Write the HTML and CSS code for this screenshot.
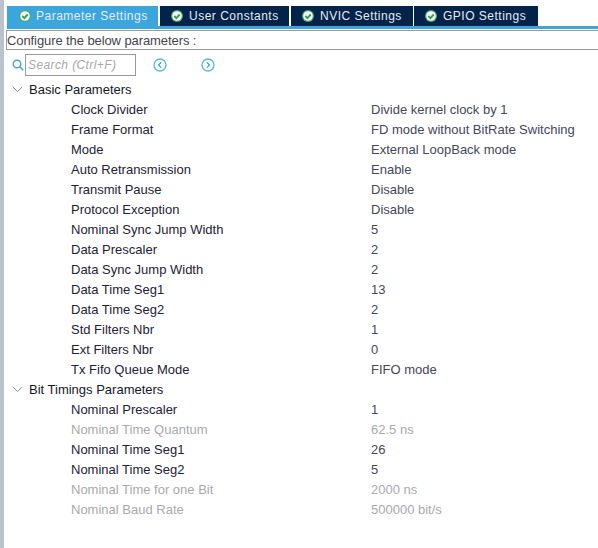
FILE: index.html
```html
<!DOCTYPE html>
<html lang="en">
<head>
<meta charset="utf-8">
<title>Parameter Settings</title>
<link rel="stylesheet" href="styles.css">
</head>
<body>
<div class="app">
  <nav class="tabs">
    <div class="tab tab-active"><svg class="check" viewBox="0 0 12 12"><circle cx="6" cy="6" r="6" fill="#4fa66e"/><circle cx="6" cy="6" r="4.8" fill="#f2f8f4"/><path d="M3.3 6l2.1 2.1 3.3-3.6" fill="none" stroke="#3d9a5f" stroke-width="1.9"/></svg><span>Parameter Settings</span></div>
    <div class="tab t2"><svg class="check" viewBox="0 0 12 12"><circle cx="6" cy="6" r="6" fill="#4fa66e"/><circle cx="6" cy="6" r="4.8" fill="#f2f8f4"/><path d="M3.3 6l2.1 2.1 3.3-3.6" fill="none" stroke="#3d9a5f" stroke-width="1.9"/></svg><span>User Constants</span></div>
    <div class="tab t3"><svg class="check" viewBox="0 0 12 12"><circle cx="6" cy="6" r="6" fill="#4fa66e"/><circle cx="6" cy="6" r="4.8" fill="#f2f8f4"/><path d="M3.3 6l2.1 2.1 3.3-3.6" fill="none" stroke="#3d9a5f" stroke-width="1.9"/></svg><span>NVIC Settings</span></div>
    <div class="tab t4"><svg class="check" viewBox="0 0 12 12"><circle cx="6" cy="6" r="6" fill="#4fa66e"/><circle cx="6" cy="6" r="4.8" fill="#f2f8f4"/><path d="M3.3 6l2.1 2.1 3.3-3.6" fill="none" stroke="#3d9a5f" stroke-width="1.9"/></svg><span>GPIO Settings</span></div>
  </nav>
  <div class="accent"></div>
  <div class="hint">Configure the below parameters :</div>
  <div class="search">
    <svg class="mag" viewBox="0 0 12 12"><circle cx="5" cy="5" r="3.8" fill="none" stroke="#3aa6dc" stroke-width="1.4"/><path d="M7.8 7.8L11.2 11.2" stroke="#3aa6dc" stroke-width="1.6"/></svg>
    <div class="search-box">Search (Ctrl+F)</div>
    <svg class="nav nav-first" viewBox="0 0 14 14"><circle cx="7" cy="7" r="6" fill="none" stroke="#5ab8e6" stroke-width="1.3"/><path d="M8 4.5L5.5 7 8 9.5" fill="none" stroke="#3aa6dc" stroke-width="1.3"/></svg>
    <svg class="nav nav-second" viewBox="0 0 14 14"><circle cx="7" cy="7" r="6" fill="none" stroke="#5ab8e6" stroke-width="1.3"/><path d="M6 4.5L8.5 7 6 9.5" fill="none" stroke="#3aa6dc" stroke-width="1.3"/></svg>
  </div>
  <div class="tree">
    <div class="group"><svg class="chev" viewBox="0 0 11 7"><path d="M.7 .8L5.5 5.6 10.3 .8" fill="none" stroke="#8a8a8a"/></svg>Basic Parameters</div>
    <div class="row"><span class="k">Clock Divider</span><span>Divide kernel clock by 1</span></div>
    <div class="row"><span class="k">Frame Format</span><span>FD mode without BitRate Switching</span></div>
    <div class="row"><span class="k">Mode</span><span>External LoopBack mode</span></div>
    <div class="row"><span class="k">Auto Retransmission</span><span>Enable</span></div>
    <div class="row"><span class="k">Transmit Pause</span><span>Disable</span></div>
    <div class="row"><span class="k">Protocol Exception</span><span>Disable</span></div>
    <div class="row"><span class="k">Nominal Sync Jump Width</span><span>5</span></div>
    <div class="row"><span class="k">Data Prescaler</span><span>2</span></div>
    <div class="row"><span class="k">Data Sync Jump Width</span><span>2</span></div>
    <div class="row"><span class="k">Data Time Seg1</span><span>13</span></div>
    <div class="row"><span class="k">Data Time Seg2</span><span>2</span></div>
    <div class="row"><span class="k">Std Filters Nbr</span><span>1</span></div>
    <div class="row"><span class="k">Ext Filters Nbr</span><span>0</span></div>
    <div class="row"><span class="k">Tx Fifo Queue Mode</span><span>FIFO mode</span></div>
    <div class="group"><svg class="chev" viewBox="0 0 11 7"><path d="M.7 .8L5.5 5.6 10.3 .8" fill="none" stroke="#8a8a8a"/></svg>Bit Timings Parameters</div>
    <div class="row"><span class="k">Nominal Prescaler</span><span>1</span></div>
    <div class="row off"><span class="k">Nominal Time Quantum</span><span>62.5 ns</span></div>
    <div class="row"><span class="k">Nominal Time Seg1</span><span>26</span></div>
    <div class="row"><span class="k">Nominal Time Seg2</span><span>5</span></div>
    <div class="row off"><span class="k">Nominal Time for one Bit</span><span>2000 ns</span></div>
    <div class="row off"><span class="k">Nominal Baud Rate</span><span>500000 bit/s</span></div>
  </div>
</div>
</body>
</html>
```

FILE: styles.css
```css
* { box-sizing: border-box; }
html, body { margin: 0; padding: 0; }
body {
  width: 598px;
  height: 548px;
  overflow: hidden;
  background: #fff;
  font-family: "Liberation Sans", Arial, sans-serif;
  font-size: 13px;
  color: #1d2238;
}
.app {
  height: 548px;
  padding: 6px 0 0 6px;
  background: #fff;
  box-shadow: inset 4px 0 0 #b9c3cb;
}
.tabs { display: flex; height: 20px; }
.tab {
  display: flex;
  align-items: center;
  background: #03234b;
  color: #e6ebf1;
  font-size: 12px;
  letter-spacing: 0.5px;
}
.tab-active { background: #3aa6dc; width: 151px; padding-left: 12px; margin-left: 1px; margin-right: 2px; }
.t2 { width: 129px; padding-left: 11px; margin-right: 2px; }
.t3 { width: 122px; padding-left: 11px; margin-right: 1px; }
.t4 { width: 124px; padding-left: 11px; }
.check { width: 12px; height: 12px; margin-right: 5px; flex: none; }
.t2 .check, .t3 .check, .t4 .check { margin-right: 6px; }
.accent { height: 3px; background: #3aa6dc; margin-left: 1px; }
.hint {
  height: 20px;
  margin-top: 1px;
  border-top: 1px solid #999;
  border-bottom: 1px solid #999;
  border-left: 1px solid #999;
  line-height: 19px;
  letter-spacing: -0.09px;
  color: #45454f;
}
.search { display: flex; align-items: center; height: 29px; padding: 1px 0 0 6px; }
.mag { width: 12px; height: 12px; margin-right: 1px; flex: none; }
.search-box {
  width: 111px;
  height: 22px;
  border: 1px solid #999;
  color: #a8a8a8;
  font-size: 12px;
  font-style: italic;
  padding-left: 2px;
  line-height: 21px;
  letter-spacing: 0.4px;
}
.nav { width: 14px; height: 14px; flex: none; }
.nav-first { margin-left: 17px; }
.nav-second { margin-left: 34px; }
.tree { display: flex; flex-direction: column; }
.group, .row { display: flex; align-items: center; height: 20px; }
.group { padding-left: 6px; color: #141829; }
.chev { width: 11px; height: 7px; margin-right: 6px; flex: none; }
.row { padding-left: 65px; color: #44475a; }
.k { width: 300px; flex: none; color: #1d2238; }
.off, .off .k { color: #a9a9ad; }
```
